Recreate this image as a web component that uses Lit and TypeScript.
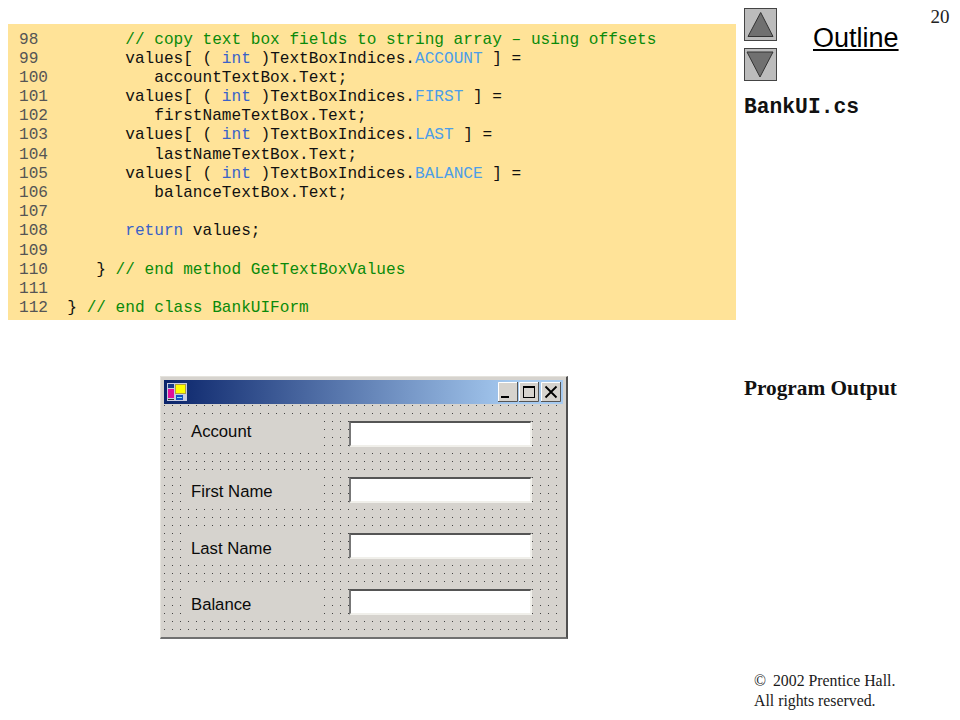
import { LitElement, html, css, svg } from "lit";
import { customElement } from "lit/decorators.js";

type Seg = [string, string?];
const lines: Seg[][] = [
  [["98"], ["         "], ["// copy text box fields to string array – using offsets", "c"]],
  [["99"], ["         values[ ( "], ["int", "k"], [" )TextBoxIndices."], ["ACCOUNT", "e"], [" ] ="]],
  [["100"], ["           accountTextBox.Text;"]],
  [["101"], ["        values[ ( "], ["int", "k"], [" )TextBoxIndices."], ["FIRST", "e"], [" ] ="]],
  [["102"], ["           firstNameTextBox.Text;"]],
  [["103"], ["        values[ ( "], ["int", "k"], [" )TextBoxIndices."], ["LAST", "e"], [" ] ="]],
  [["104"], ["           lastNameTextBox.Text;"]],
  [["105"], ["        values[ ( "], ["int", "k"], [" )TextBoxIndices."], ["BALANCE", "e"], [" ] ="]],
  [["106"], ["           balanceTextBox.Text;"]],
  [["107"]],
  [["108"], ["        "], ["return", "k"], [" values;"]],
  [["109"]],
  [["110"], ["     } "], ["// end method GetTextBoxValues", "c"]],
  [["111"]],
  [["112"], ["  } "], ["// end class BankUIForm", "c"]],
];

@customElement("app-root")
export class AppRoot extends LitElement {
  static styles = css`
    :host { display: block; width: 960px; height: 720px; background: #fff; overflow: hidden; }
    .page { display: grid; grid-template-columns: 736px 216px; padding-left: 8px; height: 720px; }
    .left { padding-top: 24px; }
    .code { background: #ffe398; width: 728px; height: 296px; box-sizing: border-box; padding: 6.5px 10px 0 11px; font: 16.1px/19.2px "Liberation Mono", monospace; color: #111; white-space: pre; }
    .line { height: 19.2px; }
    .n { color: #555; }
    .c { color: #0a8a0a; }
    .k { color: #3a62c8; }
    .e { color: #4c9ee8; }
    .win { margin: 56px 0 0 152px; width: 408px; height: 263px; box-sizing: border-box; background: #d6d3ce; border-style: solid; border-width: 1px 2px 2px 1px; border-color: #e4e2dc #505050 #707070 #e4e2dc; padding: 3px; }
    .title { height: 24px; background: linear-gradient(90deg, #0a246a, #a6caf0 88%); display: flex; align-items: center; justify-content: space-between; padding: 0 2px 0 3px; }
    .title svg { display: block; }
    .ctl { display: flex; gap: 1px; }
    .ctl svg:last-child { margin-left: 1px; }
    .form { height: 230px; box-sizing: border-box; padding: 17px 0 0 19px; display: flex; flex-direction: column; gap: 30px;
      background-color: #d6d3ce;
      background-image: radial-gradient(circle at 0.5px 0.5px, #444 0.7px, transparent 0.7px);
      background-size: 8px 8px; background-position: 0 1px; }
    .row { display: flex; align-items: center; height: 26px; }
    .lab { width: 139px; height: 26px; background: #d6d3ce; box-sizing: border-box; padding: 4px 0 0 8px; display: flex; align-items: center; font: 16.7px "Liberation Sans", sans-serif; color: #0a0a0a; }
    .row:first-child .lab { padding: 0 0 4px 8px; }
    .row:nth-child(n + 3) .lab { padding-top: 6px; }
    .input { margin-left: 27px; width: 183px; height: 26px; box-sizing: border-box; background: #fff; border: 2px solid; border-color: #555 #f0efea #f0efea #777; }
    .right { padding-top: 8px; display: flex; flex-direction: column; }
    .top { display: flex; }
    .btns { display: flex; flex-direction: column; gap: 7px; }
    .btns svg { display: block; }
    .outline { font: 27px "Liberation Sans", sans-serif; text-decoration: underline; margin: 15px 0 0 36px; height: 38px; color: #000; }
    .num { font: 19px "Liberation Serif", serif; margin: -2px 0 0 32px; color: #222; height: 20px; }
    .file { font: bold 21.3px "Liberation Mono", monospace; margin-top: 14px; color: #111; }
    .po { font: bold 21.3px "Liberation Serif", serif; margin-top: 257px; color: #111; }
    .copy { font: 15.8px/20px "Liberation Serif", serif; margin-top: auto; margin-bottom: 9px; padding-left: 10px; color: #1a1a1a; }
    .sym { margin-right: 3px; }
  `;

  private tri(up: boolean) {
    const p = up ? "16.700,4.500 29,28.500 4,28.500" : "3,4 29,4 16,29";
    return html`<svg width="33" height="33" viewBox="0 0 33 33">
      <rect x="0.500" y="0.500" width="32" height="32" fill="#bcbcbc" stroke="#444"></rect>
      ${svg`<polygon points=${p} fill="#707070" stroke="#333"></polygon>`}
    </svg>`;
  }

  private ctl(kind: string) {
    const g =
      kind === "min"
        ? svg`<rect x="3" y="14" width="8" height="2" fill="#000"></rect>`
        : kind === "max"
        ? svg`<rect x="4.500" y="4.500" width="11" height="11" fill="none" stroke="#000"></rect><rect x="4" y="4" width="12" height="2" fill="#000"></rect>`
        : svg`<path d="M4.500 4.500L15.500 15.500M15.500 4.500L4.500 15.500" stroke="#000" stroke-width="1.800"></path>`;
    return html`<svg width="20" height="20" viewBox="0 0 20 20">
      <rect width="20" height="20" fill="#d6d3ce"></rect>
      <path d="M0.500 20V0.500H20" fill="none" stroke="#fff"></path>
      <path d="M0 19.500H19.500V0" fill="none" stroke="#555"></path>
      ${g}
    </svg>`;
  }

  render() {
    return html`<div class="page">
      <div class="left">
        <div class="code">${lines.map(
          (l) => html`<div class="line">${l.map(
            (s, i) => html`<span class="${i === 0 ? "n" : s[1] ?? ""}">${s[0]}</span>`
          )}</div>`
        )}</div>
        <div class="win">
          <div class="title">
            <svg width="20" height="18" viewBox="0 0 20 18">
              <rect width="20" height="18" fill="#c8cce0"></rect>
              <rect x="1" y="1" width="6" height="4" fill="#1a3a8a"></rect>
              <rect x="1" y="6" width="6" height="9" fill="#e0109a"></rect>
              <rect x="1" y="16" width="6" height="1" fill="#333"></rect>
              <rect x="8" y="1" width="11" height="10" fill="#b0a040"></rect>
              <rect x="9" y="2" width="9" height="8" fill="#ffff00"></rect>
              <rect x="9" y="12" width="7" height="5" fill="#1050c0"></rect>
              <rect x="10" y="14" width="5" height="1" fill="#8ad8f0"></rect>
            </svg>
            <div class="ctl">${this.ctl("min")}${this.ctl("max")}${this.ctl("close")}</div>
          </div>
          <div class="form">
            ${["Account", "First Name", "Last Name", "Balance"].map(
              (t) => html`<div class="row"><div class="lab">${t}</div><div class="input"></div></div>`
            )}
          </div>
        </div>
      </div>
      <div class="right">
        <div class="top">
          <div class="btns">${this.tri(true)}${this.tri(false)}</div>
          <div class="outline">Outline</div>
          <div class="num">20</div>
        </div>
        <div class="file">BankUI.cs</div>
        <div class="po">Program Output</div>
        <div class="copy"><span class="sym">©</span> 2002 Prentice Hall.<br />All rights reserved.</div>
      </div>
    </div>`;
  }
}
